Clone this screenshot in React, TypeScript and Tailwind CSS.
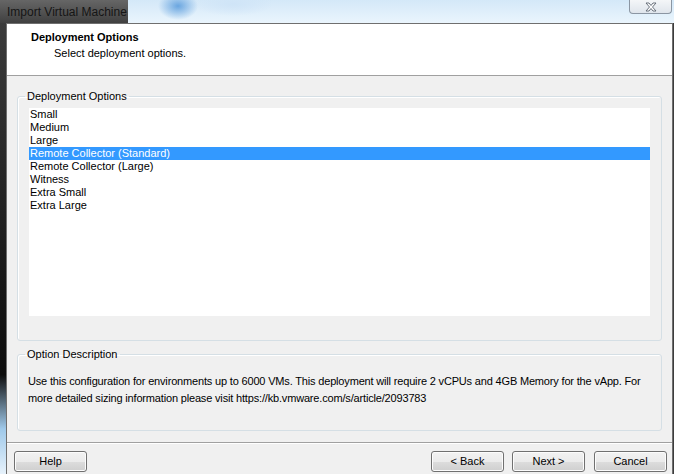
import React from "react"

const options = [
  "Small",
  "Medium",
  "Large",
  "Remote Collector (Standard)",
  "Remote Collector (Large)",
  "Witness",
  "Extra Small",
  "Extra Large",
]

function WinButton({ label, className }: { label: string; className?: string }) {
  return (
    <button
      className={
        "h-[21px] w-[73px] rounded-[3px] border border-[#707070] bg-[linear-gradient(to_bottom,#f2f2f2_0%,#ebebeb_50%,#dddddd_51%,#cfcfcf_100%)] text-[11px] leading-[19px] text-black shadow-[inset_0_0_0_1px_#fcfcfc] " +
        (className ?? "")
      }
    >
      {label}
    </button>
  )
}

export default function App() {
  return (
    <div
      className="flex h-[474px] w-[674px] flex-col overflow-hidden bg-[#f0f0f0] text-black"
      style={{ fontFamily: '"Liberation Sans", Arial, sans-serif' }}
    >
      {/* title bar */}
      <div className="flex h-[23px] shrink-0 bg-[linear-gradient(to_right,#2f2f2f_0%,#4a4a4a_40%,#3a3a3a_100%)]">
        <div className="flex w-[128px] shrink-0 items-center bg-[linear-gradient(to_bottom,#666666,#404040)] pl-[7px] text-[12px] text-[#151515]">
          Import Virtual Machine
        </div>
        <div className="relative flex-1 bg-[radial-gradient(ellipse_20px_14px_at_50px_6px,#6aa6e0,transparent),radial-gradient(ellipse_40px_12px_at_105px_4px,#cfe4f7,transparent),linear-gradient(to_bottom,#d4e8f8,#eaf5fd)]">
          <div className="absolute right-[2px] top-0 flex h-[14px] w-[43px] items-center justify-center rounded-b-[4px] border border-t-0 border-[#8b96a3] bg-[linear-gradient(to_bottom,#f4f6f8,#dfe5ec)]">
            <svg width="12" height="10" viewBox="0 0 12 10">
              <path
                d="M1 1 L4 1 L6 3.5 L8 1 L11 1 L7.5 5 L11 9 L8 9 L6 6.5 L4 9 L1 9 L4.5 5 Z"
                fill="#ffffff"
                stroke="#5c6470"
                strokeWidth="0.9"
                strokeLinejoin="round"
              />
            </svg>
          </div>
        </div>
      </div>

      <div className="flex min-h-0 flex-1">
        {/* left frame */}
        <div className="w-[6px] shrink-0 bg-[linear-gradient(to_bottom,#3b3b3b_0%,#1c1c1c_50%,#0d0d0d_78%,#9fc9ea_90%,#e7f2fb_100%)]" />

        {/* dialog */}
        <div className="flex min-w-0 flex-1 flex-col border-l border-r border-t border-[#6f6f6f] bg-[#f0f0f0]">
          {/* header */}
          <div className="h-[52px] shrink-0 border-b border-[#a0a0a0] bg-white pl-[24px] pt-[6px]">
            <div className="text-[11px] font-bold leading-[14px]">Deployment Options</div>
            <div className="mt-[2px] pl-[23px] text-[11px] leading-[14px]">Select deployment options.</div>
          </div>

          {/* body */}
          <div className="flex min-h-0 flex-1 flex-col px-[10px] pt-[14px]">
            <fieldset className="rounded-[3px] border border-[#d5dfe5] px-[11px] pb-[24px] pt-[5px] shadow-[inset_1px_1px_0_#ffffff]">
              <legend className="ml-[-4px] px-[2px] text-[11px] leading-[13px]">Deployment Options</legend>
              <div className="h-[208px] bg-white">
                {options.map((opt, i) => (
                  <div
                    key={i}
                    className={
                      i === 3
                        ? "h-[13px] bg-[#3399ff] pl-[1px] text-[11px] leading-[13px] text-white"
                        : "h-[13px] pl-[1px] text-[11px] leading-[13px]"
                    }
                  >
                    {opt}
                  </div>
                ))}
              </div>
            </fieldset>

            <fieldset className="mt-[7px] rounded-[3px] border border-[#d5dfe5] pb-[23px] pl-[10px] pr-[6px] pt-[12px] shadow-[inset_1px_1px_0_#ffffff]">
              <legend className="ml-[-3px] px-[2px] text-[11px] leading-[13px]">Option Description</legend>
              <p className="text-[11px] leading-[17px] tracking-[-0.17px]">
                Use this configuration for environments up to 6000 VMs. This deployment will require 2 vCPUs and 4GB Memory for the vApp. For
                more detailed sizing information please visit https://kb.vmware.com/s/article/2093783
              </p>
            </fieldset>
          </div>

          {/* footer */}
          <div className="mt-[10px] flex h-[32px] shrink-0 items-start border-t border-[#a0a0a0] pl-[7px] pt-[8px] shadow-[inset_0_1px_0_#ffffff]">
            <WinButton label="Help" />
            <div className="flex-1" />
            <WinButton label="< Back" />
            <WinButton label="Next >" className="ml-[8px]" />
            <WinButton label="Cancel" className="ml-[9px] mr-[5px]" />
          </div>
        </div>

        {/* right frame */}
        <div className="w-[1px] shrink-0 bg-[#3c3c3c]" />
      </div>
    </div>
  )
}
